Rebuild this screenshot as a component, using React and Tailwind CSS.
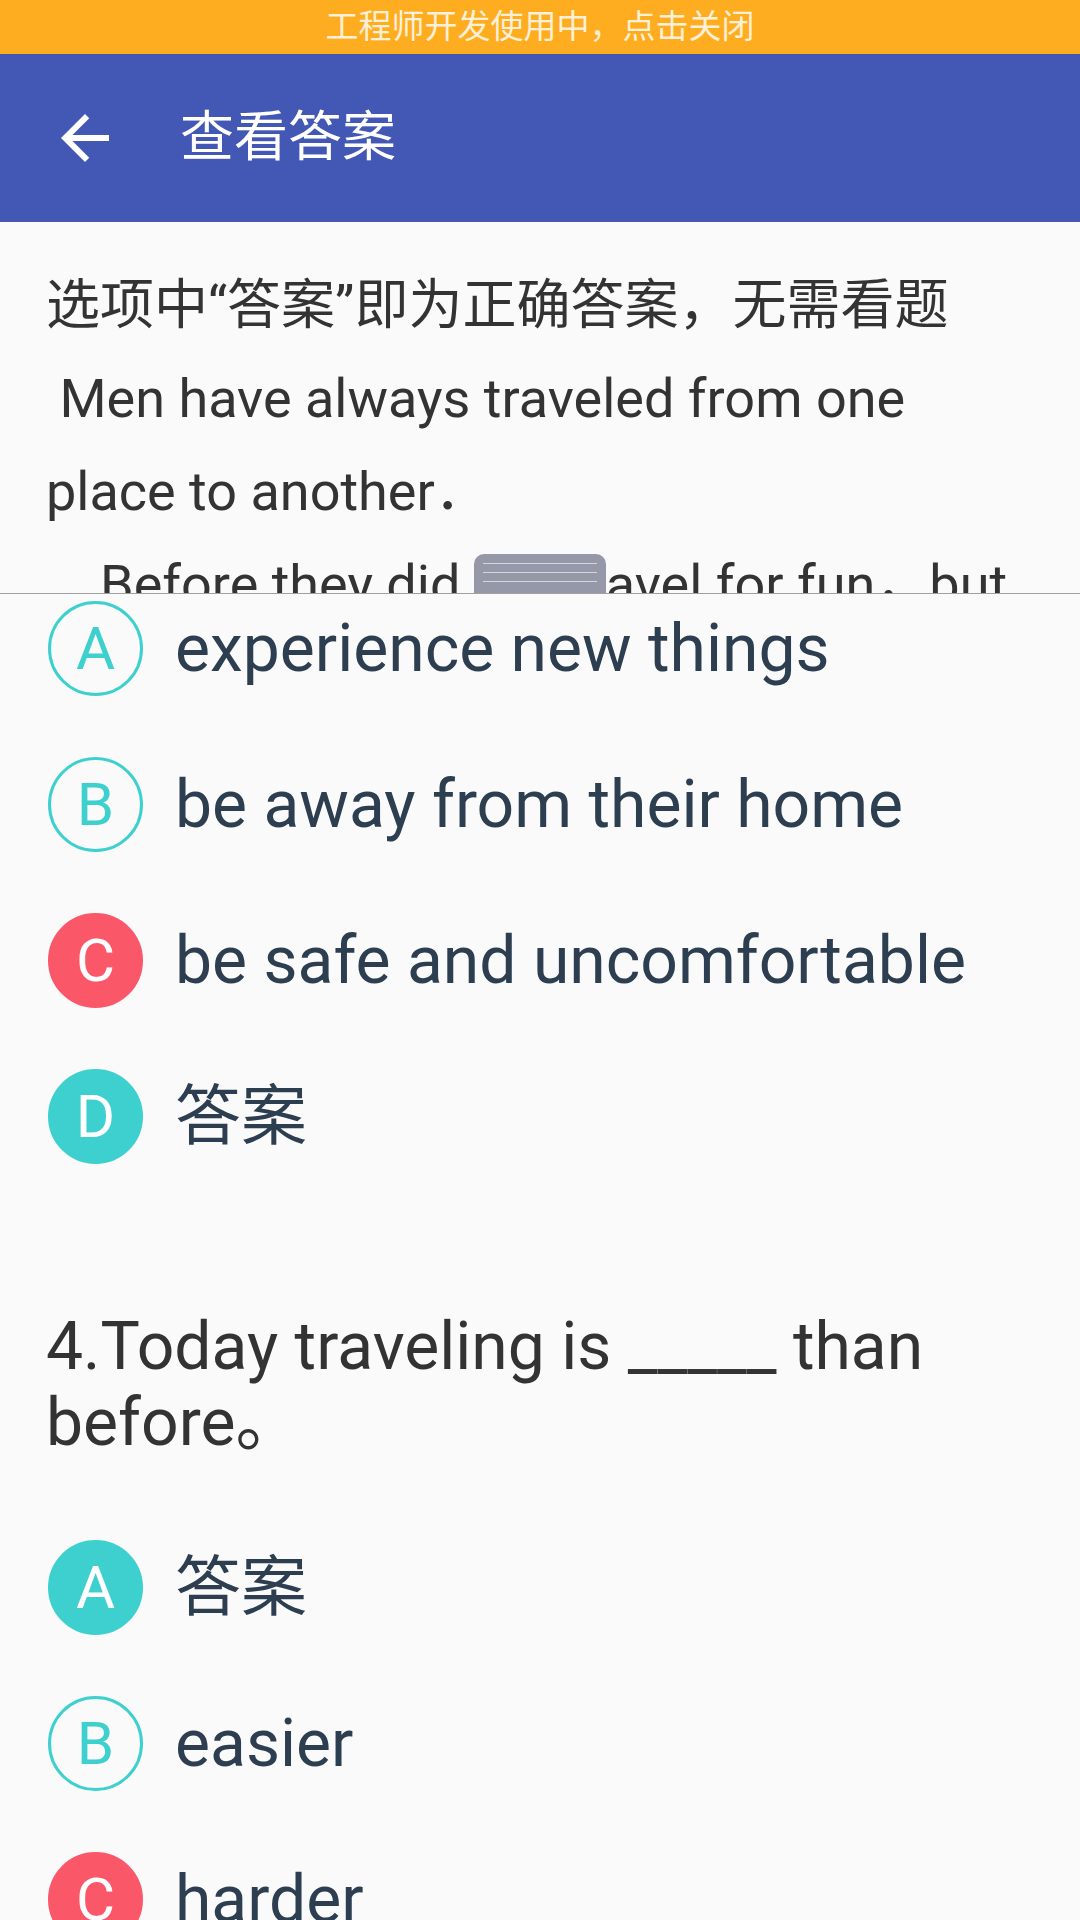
const FONT = { fontFamily: "Roboto, 'Noto Sans CJK SC', sans-serif" };

const Q3 = [
  { key: "A", text: "experience new things", state: "outline" },
  { key: "B", text: "be away from their home", state: "outline" },
  { key: "C", text: "be safe and uncomfortable", state: "wrong" },
  { key: "D", text: "答案", state: "right" },
];

const Q4 = [
  { key: "A", text: "答案", state: "right" },
  { key: "B", text: "easier", state: "outline" },
  { key: "C", text: "harder", state: "wrong" },
];

function Badge({ label, state }) {
  const cls =
    state === "wrong"
      ? "bg-[#fa5769] text-white border-[#fa5769]"
      : state === "right"
      ? "bg-[#3dd0cf] text-white border-[#3dd0cf]"
      : "bg-transparent text-[#3dd0cf] border-[#3dd0cf]";
  return (
    <div
      className={`w-[95px] h-[95px] shrink-0 rounded-full border-[3px] flex items-center justify-center text-[60px] leading-none ${cls}`}
    >
      {label}
    </div>
  );
}

function Options({ items }) {
  return (
    <div className="flex flex-col gap-[61px] pl-[48px]">
      {items.map(o => (
        <div key={o.key} className="flex items-center gap-[32px] h-[95px]">
          <Badge label={o.key} state={o.state} />
          <span className="text-[66px] leading-none text-[#2c3e50] whitespace-nowrap">{o.text}</span>
        </div>
      ))}
    </div>
  );
}

function Pic() {
  return (
    <span className="inline-block align-[-11px] w-[132px] h-[60px] bg-[#9598a9] rounded-t-[10px] pt-[9px] px-[9px]">
      <span className="block h-[1px] bg-[#d6d6d6] mb-[8px]"></span>
      <span className="block h-[1px] bg-[#d6d6d6] mb-[8px]"></span>
      <span className="block h-[1px] bg-[#d6d6d6]"></span>
    </span>
  );
}

export default function App() {
  return (
    <div className="w-[1080px] h-[1920px] overflow-hidden bg-[#fafafa]" style={FONT}>
      <div className="h-[54px] bg-[#ffad20] flex items-center justify-center text-[33px] text-[#fdf0d8]">
        工程师开发使用中，点击关闭
      </div>

      <div className="h-[168px] bg-[#4258b4] flex items-center text-white">
        <div className="w-[72px] h-[72px] ml-[49px] flex items-center justify-center">
          <svg width="72" height="72" viewBox="0 0 24 24" fill="white">
            <path d="M20 11H7.83l5.59-5.59L12 4l-8 8 8 8 1.41-1.41L7.83 13H20v-2z" />
          </svg>
        </div>
        <span className="ml-[59px] text-[54px] leading-none">查看答案</span>
      </div>

      <div className="h-[372px] overflow-hidden border-b border-[#a0a0a0] px-[46px] pt-[37px] text-[54px] leading-[93px] text-[#333333]">
        <div>选项中“答案”即为正确答案，无需看题</div>
        <div className="whitespace-pre-wrap">
          {" Men have always traveled from one place to another．"}
          <br />
          {"　Before they did "}
          <Pic />
          {"avel for fun，but"}
        </div>
      </div>

      <div className="pt-[7px]">
        <Options items={Q3} />
      </div>

      <div className="pt-[145px] px-[46px] text-[66px] leading-[76px] text-[#333333]">
        4.Today traveling is _____ than before。
      </div>

      <div className="pt-[79px]">
        <Options items={Q4} />
      </div>
    </div>
  );
}
